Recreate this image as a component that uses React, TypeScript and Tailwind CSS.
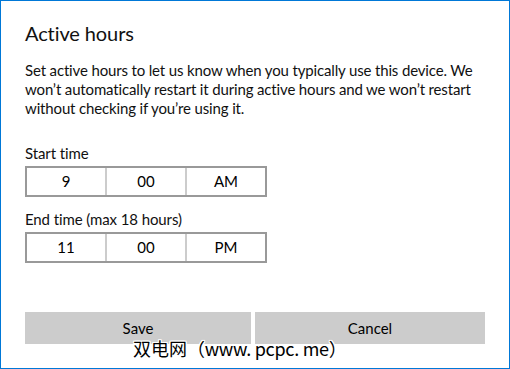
import React from "react";

function TimeBox({ a, b, c }: { a: string; b: string; c: string }) {
  return (
    <div className="flex w-[242px] h-[31px] border-2 border-[#999999] text-[15px] text-[#000000]">
      <div className="flex-1 flex items-center justify-center">{a}</div>
      <div className="w-[2px] bg-[#cccccc]" />
      <div className="flex-1 flex items-center justify-center">{b}</div>
      <div className="w-[2px] bg-[#cccccc]" />
      <div className="flex-1 flex items-center justify-center">{c}</div>
    </div>
  );
}

export default function App() {
  return (
    <div
      className="relative w-[510px] h-[369px] bg-white border border-[#0078d7] px-[24px] text-[#000000]"
      style={{ fontFamily: 'Lato, "Segoe UI", sans-serif' }}
    >
      <div className="pt-[18px] text-[20px] leading-[28px] tracking-[-0.1px] text-[#111111]">Active hours</div>
      <div className="mt-[14px] text-[15px] leading-[19px] whitespace-nowrap tracking-[-0.15px] text-[#111111]">
        Set active hours to let us know when you typically use this device. We
        <br />
        won’t automatically restart it during active hours and we won’t restart
        <br />
        without checking if you’re using it.
      </div>
      <div className="mt-[26px] text-[15px] leading-[19px] tracking-[-0.1px] text-[#111111]">Start time</div>
      <div className="mt-[3px]">
        <TimeBox a="9" b="00" c="AM" />
      </div>
      <div className="mt-[13px] text-[15px] leading-[19px] tracking-[-0.1px] text-[#111111]">End time (max 18 hours)</div>
      <div className="mt-[3px]">
        <TimeBox a="11" b="00" c="PM" />
      </div>
      <div className="mt-[49px] flex gap-[4px] w-[460px]">
        <div className="w-[226px] h-[32px] bg-[#cccccc] flex items-center justify-center text-[15px]">Save</div>
        <div className="flex-1 h-[32px] bg-[#cccccc] flex items-center justify-center text-[15px]">Cancel</div>
      </div>
      <div
        className="absolute left-[132px] top-[335px] text-[18px] leading-[24px] text-black whitespace-nowrap"
        style={{
          fontFamily: '"Noto Sans CJK SC", sans-serif',
          textShadow:
            "1px 0 #fff, -1px 0 #fff, 0 1px #fff, 0 -1px #fff, 1px 1px #fff, -1px -1px #fff, 1px -1px #fff, -1px 1px #fff",
        }}
      >
        双电网<span className="tracking-[-0.3px]">（www. pcpc. me）</span>
      </div>
    </div>
  );
}
